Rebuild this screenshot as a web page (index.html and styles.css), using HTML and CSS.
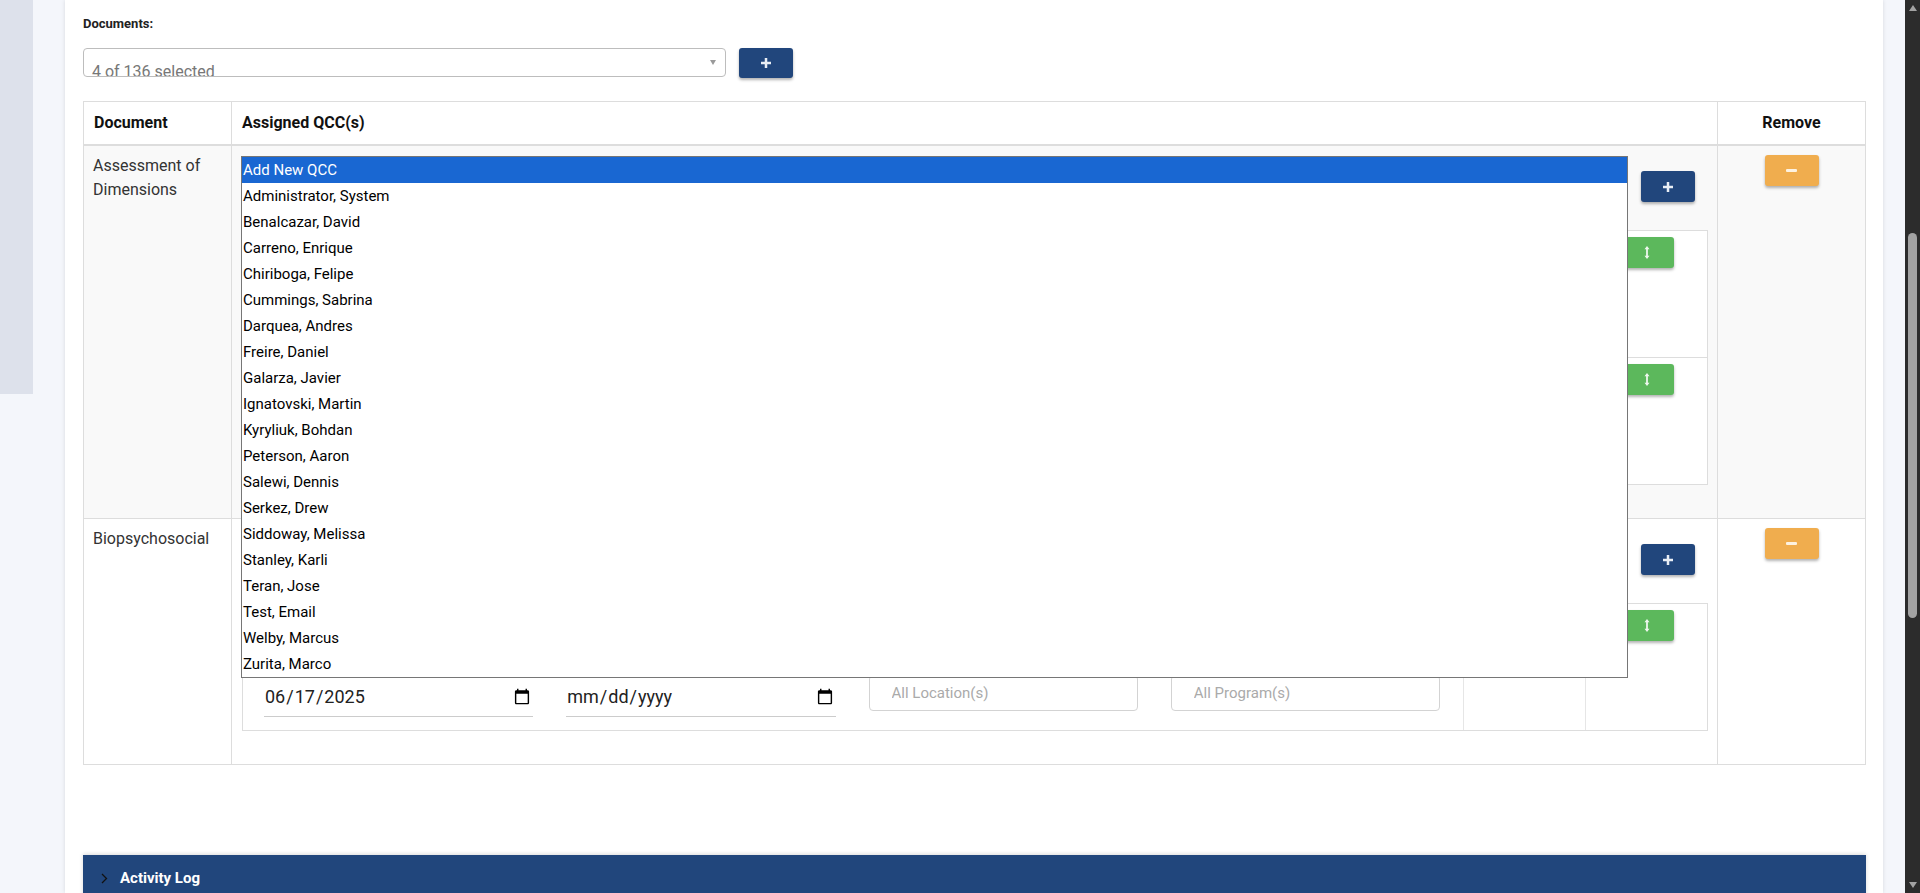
FILE: index.html
```html
<!DOCTYPE html>
<html lang="en">
<head>
    <meta charset="UTF-8">
    <meta name="viewport" content="width=device-width, initial-scale=1.0">
    <title>Document QCC Assignment</title>
    <link rel="stylesheet" href="styles.css">
</head>
<body>
    <div class="viewport">
        <div class="page">
            <aside class="side-strip"></aside>
            <main class="panel">
                <div class="field-label">Documents:</div>
                <div class="doc-picker">
                    <div class="multi-select">
                        <span class="multi-select-text">4 of 136 selected</span>
                        <span class="caret"></span>
                    </div>
                    <button class="btn btn-primary btn-doc-add">
                        <svg width="10" height="10" viewBox="0 0 10 10"><path d="M3.75 0h2.5v3.75H10v2.5H6.25V10h-2.5V6.25H0v-2.5h3.75z" fill="#e9eef5"/></svg>
                    </button>
                </div>

                <table class="doc-table">
                    <colgroup>
                        <col class="col-doc">
                        <col>
                        <col class="col-remove">
                    </colgroup>
                    <thead>
                        <tr>
                            <th>Document</th>
                            <th>Assigned QCC(s)</th>
                            <th class="th-center">Remove</th>
                        </tr>
                    </thead>
                    <tbody>
                        <tr class="row-alt">
                            <td class="doc-name">Assessment of Dimensions</td>
                            <td class="qcc-cell">
                                <div class="qcc-wrap">
                                    <div class="qcc-head">
                                        <select class="qcc-select"><option>Add New QCC</option></select>
                                        <button class="btn btn-primary btn-add">
                                            <svg width="10" height="10" viewBox="0 0 10 10"><path d="M3.75 0h2.5v3.75H10v2.5H6.25V10h-2.5V6.25H0v-2.5h3.75z" fill="#e9eef5"/></svg>
                                        </button>
                                    </div>
                                    <div class="qcc-list">
                                        <div class="qcc-entry">
                                            <div class="qcc-fields">
                                                <input class="date-input" type="date" value="2025-06-17">
                                                <input class="date-input" type="date">
                                                <input class="text-input" type="text" placeholder="All Location(s)">
                                                <input class="text-input" type="text" placeholder="All Program(s)">
                                            </div>
                                            <div class="qcc-col"></div>
                                            <div class="qcc-col qcc-move">
                                                <button class="btn btn-success">
                                                    <svg width="8" height="15" viewBox="0 0 8 15"><path d="M4 3v9" stroke="#eef7ee" stroke-width="1.8"/><path d="M1.5 4.2 4 1l2.5 3.2zM1.5 10.8 4 14l2.5-3.2z" fill="#eef7ee"/></svg>
                                                </button>
                                            </div>
                                        </div>
                                        <div class="qcc-entry">
                                            <div class="qcc-fields">
                                                <input class="date-input" type="date" value="2025-06-17">
                                                <input class="date-input" type="date">
                                                <input class="text-input" type="text" placeholder="All Location(s)">
                                                <input class="text-input" type="text" placeholder="All Program(s)">
                                            </div>
                                            <div class="qcc-col"></div>
                                            <div class="qcc-col qcc-move">
                                                <button class="btn btn-success">
                                                    <svg width="8" height="15" viewBox="0 0 8 15"><path d="M4 3v9" stroke="#eef7ee" stroke-width="1.8"/><path d="M1.5 4.2 4 1l2.5 3.2zM1.5 10.8 4 14l2.5-3.2z" fill="#eef7ee"/></svg>
                                                </button>
                                            </div>
                                        </div>
                                    </div>

                                    <!-- open QCC picker -->
                                    <ul class="qcc-dropdown">
                                        <li class="active">Add New QCC</li>
                                        <li>Administrator, System</li>
                                        <li>Benalcazar, David</li>
                                        <li>Carreno, Enrique</li>
                                        <li>Chiriboga, Felipe</li>
                                        <li>Cummings, Sabrina</li>
                                        <li>Darquea, Andres</li>
                                        <li>Freire, Daniel</li>
                                        <li>Galarza, Javier</li>
                                        <li>Ignatovski, Martin</li>
                                        <li>Kyryliuk, Bohdan</li>
                                        <li>Peterson, Aaron</li>
                                        <li>Salewi, Dennis</li>
                                        <li>Serkez, Drew</li>
                                        <li>Siddoway, Melissa</li>
                                        <li>Stanley, Karli</li>
                                        <li>Teran, Jose</li>
                                        <li>Test, Email</li>
                                        <li>Welby, Marcus</li>
                                        <li>Zurita, Marco</li>
                                    </ul>
                                </div>
                            </td>
                            <td class="remove-cell">
                                <button class="btn btn-warning">
                                    <svg width="11" height="3" viewBox="0 0 11 3"><rect width="11" height="3" rx="1" fill="#fdf2e1"/></svg>
                                </button>
                            </td>
                        </tr>
                        <tr>
                            <td class="doc-name">Biopsychosocial</td>
                            <td class="qcc-cell">
                                <div class="qcc-wrap">
                                    <div class="qcc-head">
                                        <select class="qcc-select"><option>Add New QCC</option></select>
                                        <button class="btn btn-primary btn-add">
                                            <svg width="10" height="10" viewBox="0 0 10 10"><path d="M3.75 0h2.5v3.75H10v2.5H6.25V10h-2.5V6.25H0v-2.5h3.75z" fill="#e9eef5"/></svg>
                                        </button>
                                    </div>
                                    <div class="qcc-list">
                                        <div class="qcc-entry">
                                            <div class="qcc-fields">
                                                <input class="date-input" type="date" value="2025-06-17">
                                                <input class="date-input" type="date">
                                                <input class="text-input" type="text" placeholder="All Location(s)">
                                                <input class="text-input" type="text" placeholder="All Program(s)">
                                            </div>
                                            <div class="qcc-col"></div>
                                            <div class="qcc-col qcc-move">
                                                <button class="btn btn-success">
                                                    <svg width="8" height="15" viewBox="0 0 8 15"><path d="M4 3v9" stroke="#eef7ee" stroke-width="1.8"/><path d="M1.5 4.2 4 1l2.5 3.2zM1.5 10.8 4 14l2.5-3.2z" fill="#eef7ee"/></svg>
                                                </button>
                                            </div>
                                        </div>
                                    </div>
                                </div>
                            </td>
                            <td class="remove-cell">
                                <button class="btn btn-warning">
                                    <svg width="11" height="3" viewBox="0 0 11 3"><rect width="11" height="3" rx="1" fill="#fdf2e1"/></svg>
                                </button>
                            </td>
                        </tr>
                    </tbody>
                </table>

                <section class="activity-log">
                    <svg width="7" height="11" viewBox="0 0 7 11"><path d="M1 1l4.5 4.5L1 10" fill="none" stroke="#111" stroke-width="1.3"/></svg>
                    <span>Activity Log</span>
                </section>
            </main>
        </div>
        <div class="scrollbar">
            <span class="scroll-arrow up"></span>
            <span class="scroll-thumb"></span>
            <span class="scroll-arrow down"></span>
        </div>
    </div>
</body>
</html>
```

FILE: styles.css
```css
body {
    margin: 0;
    font-family: Roboto, 'Liberation Sans', sans-serif;
    color: #333;
    overflow: hidden;
}
.viewport {
    display: flex;
    height: 893px;
}
.page {
    flex: 1;
    display: flex;
    align-items: flex-start;
    background-color: #f4f6fb;
}
.side-strip {
    flex-shrink: 0;
    width: 33px;
    height: 394px;
    background-color: #dde1eb;
}
.panel {
    box-sizing: border-box;
    width: 1818px;
    height: 893px;
    margin-left: 32px;
    padding: 15px 17px 0 18px;
    background-color: #fff;
    box-shadow: 0 0 4px rgba(0,0,0,0.12);
}

/* document picker */
.field-label {
    font-size: 13px;
    font-weight: 700;
    line-height: 18px;
    color: #222;
}
.doc-picker {
    display: flex;
    gap: 13px;
    margin-top: 15px;
}
.multi-select {
    box-sizing: border-box;
    position: relative;
    width: 643px;
    height: 29px;
    padding: 14px 0 0 8px;
    border: 1px solid #bdbdbd;
    border-radius: 4px;
    overflow: hidden;
}
.multi-select-text {
    display: block;
    font-size: 16px;
    line-height: 18px;
    color: #777;
}
.caret {
    position: absolute;
    right: 9px;
    top: 11px;
    border-left: 3.5px solid transparent;
    border-right: 3.5px solid transparent;
    border-top: 5px solid #9a9a9a;
}

/* buttons */
.btn {
    display: inline-flex;
    align-items: center;
    justify-content: center;
    flex-shrink: 0;
    width: 54px;
    height: 31px;
    padding: 0;
    border: none;
    border-radius: 3px;
    box-shadow: 0 2px 3px rgba(0,0,0,0.3);
    cursor: pointer;
}
.btn-doc-add {
    height: 30px;
}
.btn-primary {
    background-color: #21467c;
}
.btn-warning {
    background-color: #f0ad4e;
}
.btn-success {
    background-color: #5cb85c;
}

/* table */
.doc-table {
    width: 100%;
    margin-top: 23px;
    border-collapse: collapse;
    table-layout: fixed;
}
.col-doc,
.col-remove {
    width: 148px;
}
.doc-table th,
.doc-table td {
    border: 1px solid #ddd;
    vertical-align: top;
    text-align: left;
}
.doc-table th {
    padding: 10px;
    font-size: 16px;
    font-weight: 700;
    line-height: 22px;
    color: #111;
    border-bottom-width: 2px;
}
.doc-table th.th-center {
    text-align: center;
}
.row-alt td {
    background-color: #f9f9f9;
}
.doc-table td.doc-name {
    padding: 8px 9px;
    font-size: 16px;
    font-weight: 400;
    line-height: 24px;
    color: #333;
}
.doc-table td.qcc-cell {
    padding: 8px 9px 33px 10px;
}
.doc-table td.remove-cell {
    padding-top: 9px;
    text-align: center;
}

/* assigned QCCs */
.qcc-wrap {
    position: relative;
}
.qcc-head {
    display: flex;
    align-items: flex-start;
    gap: 14px;
    height: 76px;
    padding-right: 13px;
}
.qcc-select {
    flex: 1;
    height: 34px;
    margin-top: 18px;
    border: none;
    border-bottom: 1px solid #ccc;
    background: transparent;
    font: inherit;
    appearance: none;
}
.btn-add {
    margin-top: 17px;
}
.qcc-list {
    border: 1px solid #ddd;
    background-color: #fff;
}
.qcc-entry {
    display: grid;
    grid-template-columns: 1fr 122px 122px;
    min-height: 126px;
}
.qcc-entry + .qcc-entry {
    border-top: 1px solid #ddd;
}
.qcc-fields {
    display: grid;
    grid-template-columns: repeat(4, 1fr);
    column-gap: 33px;
    align-items: start;
    padding: 73px 23px 0 21px;
}
.qcc-col {
    border-left: 1px solid #e6e6e6;
}
.qcc-move {
    display: flex;
    justify-content: center;
    align-items: flex-start;
    padding-top: 6px;
}
.date-input {
    box-sizing: border-box;
    width: 100%;
    height: 40px;
    padding: 0;
    border: none;
    border-bottom: 1px solid #ccc;
    background: transparent;
    font-family: Roboto, 'Liberation Sans', sans-serif;
    font-size: 18px;
    color: #222;
}
.text-input {
    box-sizing: border-box;
    width: 100%;
    height: 36px;
    margin-top: -2px;
    padding: 0 0 0 22px;
    border: 1px solid #d3d3d3;
    border-radius: 4px;
    font-family: Roboto, 'Liberation Sans', sans-serif;
    font-size: 15px;
}
.text-input::placeholder {
    color: #aaa;
}

/* open dropdown list */
.qcc-dropdown {
    box-sizing: border-box;
    position: absolute;
    left: -1px;
    top: 2px;
    z-index: 5;
    width: 1387px;
    margin: 0;
    padding: 0;
    list-style: none;
    border: 1px solid #767676;
    background-color: #fff;
}
.qcc-dropdown li {
    height: 26px;
    padding-left: 1px;
    font-size: 15px;
    line-height: 26px;
    color: #000;
}
.qcc-dropdown li.active {
    background-color: #1967d2;
    color: #fff;
}

/* collapsible */
.activity-log {
    display: flex;
    align-items: center;
    gap: 12px;
    height: 46px;
    margin-top: 90px;
    padding-left: 18px;
    background-color: #21467c;
    color: #fff;
    font-size: 15px;
    font-weight: 700;
    box-shadow: 0 -1px 4px rgba(0,0,0,0.15);
}

/* window scrollbar */
.scrollbar {
    display: flex;
    flex-direction: column;
    align-items: center;
    width: 15px;
    background-color: #2c2c2c;
}
.scroll-arrow {
    border-left: 4px solid transparent;
    border-right: 4px solid transparent;
}
.scroll-arrow.up {
    margin-top: 5px;
    border-bottom: 6px solid #a3a3a3;
}
.scroll-arrow.down {
    margin-top: auto;
    margin-bottom: 5px;
    border-top: 6px solid #a3a3a3;
}
.scroll-thumb {
    width: 9px;
    height: 385px;
    margin-top: 222px;
    border-radius: 5px;
    background-color: #a3a3a3;
}
```
